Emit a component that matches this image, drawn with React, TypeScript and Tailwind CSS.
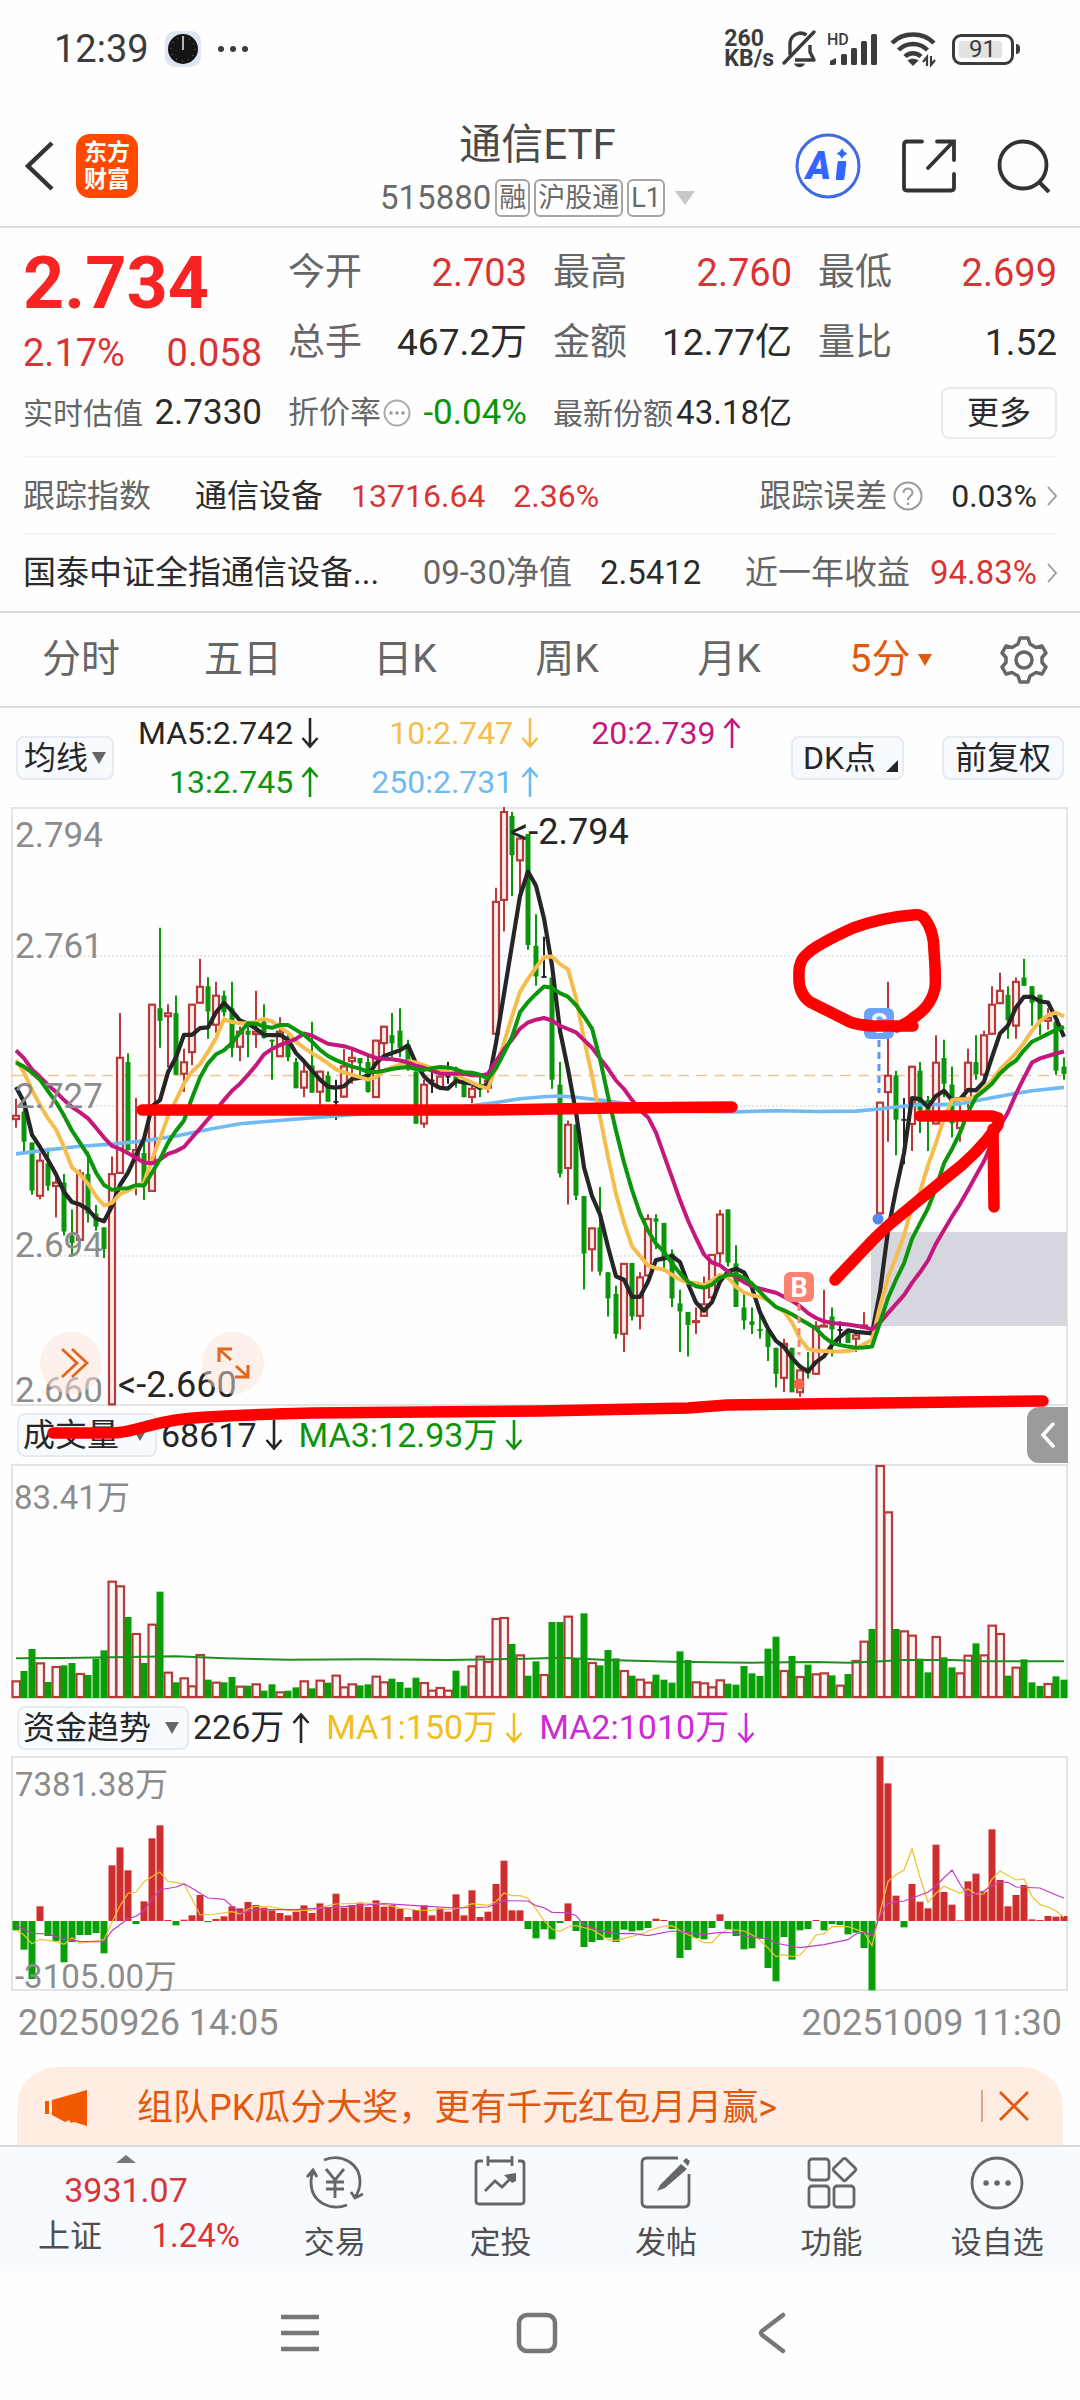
import { useState } from "react";
import type { ReactNode } from "react";

const RED = "#b93a3a";
const GREEN = "#0a950a";
const BLACK = "#262626";
const YELLOW = "#f5bd4d";
const MAGENTA = "#c4187c";
const BLUE = "#6fbaf2";

// distance between two bars and centre of the first one
const STEP = 8;
const barX = (i: number) => 4 + i * STEP;

// price scale units -> pixels in the 1056x599 price pane
const priceY = (v: number) => (v - 22) / 2.45;

type Candle = [kind: "r" | "g" | "k", top: number, bottom: number, high: number, low: number];

const candles: Candle[] = [
  ["r", 776, 789, 737, 808], ["g", 768, 842, 760, 865], ["g", 844, 962, 844, 972], ["r", 886, 977, 870, 983],
  ["g", 895, 950, 857, 962], ["r", 940, 953, 930, 1028], ["g", 942, 1062, 921, 1072], ["g", 1072, 1090, 1008, 1117],
  ["r", 917, 1085, 910, 1085], ["g", 921, 1018, 866, 1040], ["g", 1018, 1050, 997, 1060], ["g", 1052, 1105, 1052, 1127],
  ["r", 919, 1488, 878, 1488], ["r", 634, 921, 527, 921], ["g", 647, 863, 626, 863], ["r", 860, 882, 735, 973],
  ["g", 870, 950, 835, 985], ["r", 504, 965, 504, 965], ["g", 515, 546, 318, 612], ["r", 525, 537, 505, 660],
  ["g", 527, 678, 484, 678], ["r", 645, 678, 614, 720], ["r", 504, 625, 504, 655], ["r", 460, 504, 394, 504],
  ["g", 461, 523, 439, 590], ["r", 482, 558, 450, 575], ["g", 484, 525, 472, 535], ["g", 515, 612, 450, 635],
  ["r", 570, 612, 560, 645], ["g", 570, 580, 560, 635], ["r", 570, 581, 472, 612], ["g", 548, 588, 505, 590],
  ["g", 592, 596, 592, 690], ["r", 570, 635, 537, 635], ["g", 590, 635, 570, 645], ["g", 647, 711, 637, 711],
  ["r", 668, 712, 645, 733], ["g", 655, 722, 548, 722], ["r", 668, 722, 668, 755], ["g", 680, 744, 670, 744],
  ["k", 742, 746, 690, 788], ["r", 655, 734, 615, 734], ["r", 634, 647, 615, 700], ["g", 637, 650, 637, 690],
  ["g", 647, 720, 626, 722], ["r", 592, 735, 592, 735], ["r", 558, 603, 558, 628], ["g", 581, 601, 527, 635],
  ["g", 570, 612, 515, 635], ["g", 605, 665, 592, 668], ["g", 670, 798, 670, 798], ["r", 700, 800, 690, 808],
  ["k", 690, 694, 670, 723], ["r", 680, 712, 680, 712], ["k", 680, 684, 647, 700], ["g", 670, 695, 658, 710],
  ["g", 700, 733, 690, 733], ["r", 710, 735, 705, 748], ["g", 700, 715, 680, 733], ["r", 690, 712, 668, 722],
  ["r", 252, 580, 220, 590], ["r", 32, 252, 22, 327], ["g", 44, 140, 34, 240], ["r", 97, 155, 97, 240],
  ["g", 88, 360, 88, 372], ["g", 362, 437, 285, 460], ["k", 436, 440, 340, 440], ["g", 440, 690, 440, 712],
  ["g", 702, 920, 647, 930], ["r", 798, 909, 790, 996], ["g", 800, 974, 800, 985], ["g", 975, 1116, 975, 1204],
  ["r", 1052, 1108, 1052, 1160], ["g", 1052, 1160, 953, 1170], ["g", 1162, 1226, 1162, 1270], ["g", 1215, 1313, 1195, 1324],
  ["r", 1139, 1315, 1139, 1357], ["g", 1139, 1270, 1139, 1280], ["r", 1172, 1271, 1162, 1302], ["r", 1029, 1172, 1020, 1172],
  ["g", 1030, 1038, 1020, 1105], ["g", 1041, 1130, 1041, 1160], ["g", 1116, 1226, 1106, 1247], ["g", 1238, 1258, 1205, 1357],
  ["g", 1259, 1291, 1259, 1368], ["r", 1279, 1283, 1248, 1313], ["r", 1238, 1271, 1172, 1271], ["r", 1117, 1226, 1117, 1235],
  ["r", 1018, 1118, 1009, 1140], ["g", 1008, 1138, 1008, 1148], ["g", 1140, 1247, 1096, 1247], ["g", 1248, 1280, 1215, 1302],
  ["g", 1282, 1291, 1248, 1313], ["g", 1301, 1305, 1260, 1324], ["g", 1303, 1345, 1292, 1379], ["g", 1347, 1411, 1347, 1444],
  ["r", 1335, 1423, 1325, 1455], ["g", 1347, 1456, 1347, 1456], ["r", 1400, 1458, 1400, 1467], ["g", 1395, 1410, 1357, 1422],
  ["r", 1292, 1413, 1282, 1413], ["r", 1290, 1294, 1205, 1294], ["g", 1270, 1302, 1248, 1368], ["k", 1301, 1305, 1282, 1335],
  ["g", 1305, 1335, 1305, 1335], ["r", 1314, 1327, 1310, 1357], ["r", 1290, 1300, 1260, 1300], ["g", 1300, 1310, 1300, 1310],
  ["r", 744, 1020, 744, 1030], ["r", 678, 723, 450, 842], ["g", 680, 788, 668, 875], ["k", 786, 790, 735, 897],
  ["r", 656, 801, 656, 865], ["g", 668, 765, 647, 821], ["g", 740, 765, 730, 865], ["r", 646, 800, 581, 800],
  ["g", 637, 700, 592, 733], ["g", 702, 797, 658, 832], ["r", 775, 811, 745, 842], ["r", 646, 745, 614, 760],
  ["g", 647, 677, 581, 690], ["r", 579, 680, 570, 690], ["r", 504, 580, 461, 580], ["r", 470, 505, 428, 505],
  ["g", 482, 545, 461, 590], ["r", 448, 560, 440, 590], ["g", 440, 460, 394, 460], ["g", 461, 502, 461, 558],
  ["g", 482, 545, 482, 581], ["r", 536, 548, 515, 568], ["g", 548, 668, 548, 678], ["g", 658, 676, 636, 690],
];

const ma5 = [
  708, 745, 825, 855, 887, 922, 965, 990, 996, 1008, 1030, 1037, 1000, 948, 918, 875, 835, 755, 740, 672, 635, 580, 580,
  564, 562, 525, 502, 522, 545, 553, 565, 580, 581, 580, 592, 625, 645, 668, 690, 707, 710, 706, 688, 686, 680, 650, 632,
  625, 618, 606, 650, 682, 700, 710, 712, 693, 697, 700, 710, 702, 600, 480, 360, 240, 180, 215, 295, 410, 570, 665, 770,
  905, 975, 1020, 1100, 1172, 1180, 1222, 1222, 1185, 1132, 1128, 1122, 1137, 1190, 1236, 1256, 1235, 1185, 1160, 1153,
  1162, 1200, 1260, 1300, 1330, 1345, 1372, 1393, 1405, 1382, 1368, 1340, 1320, 1304, 1308, 1310, 1312, 1210, 1060, 960,
  870, 735, 738, 757, 730, 717, 740, 738, 715, 716, 695, 635, 577, 557, 513, 487, 487, 498, 501, 540, 585,
];

const ma10 = [
  642, 672, 715, 752, 785, 812, 855, 905, 922, 945, 975, 998, 992, 970, 962, 952, 942, 885, 835, 780, 740, 700, 670, 652,
  622, 588, 542, 549, 552, 552, 548, 541, 547, 562, 575, 597, 612, 625, 637, 650, 665, 672, 678, 684, 690, 684, 668, 660,
  653, 645, 648, 655, 662, 668, 670, 678, 688, 697, 706, 712, 660, 600, 535, 475, 443, 415, 390, 388, 407, 420, 490, 590,
  680, 780, 880, 970, 1040, 1098, 1122, 1145, 1152, 1155, 1168, 1180, 1187, 1188, 1194, 1182, 1168, 1175, 1197, 1212,
  1218, 1222, 1230, 1247, 1258, 1285, 1325, 1350, 1354, 1355, 1356, 1356, 1355, 1350, 1338, 1328, 1245, 1175, 1125, 1072,
  1000, 965, 900, 845, 785, 740, 738, 738, 730, 712, 692, 665, 645, 625, 600, 570, 547, 532, 526, 535,
];

const ma13 = [
  648, 658, 673, 690, 718, 745, 778, 815, 845, 875, 918, 948, 960, 957, 956, 948, 950, 918, 885, 845, 815, 790, 735, 685,
  650, 628, 618, 600, 575, 552, 553, 560, 563, 556, 556, 568, 580, 597, 617, 632, 642, 650, 658, 663, 671, 671, 668, 664,
  661, 659, 664, 666, 662, 659, 660, 665, 672, 673, 678, 688, 662, 625, 585, 525, 500, 480, 462, 465, 478, 487, 507, 535,
  565, 640, 730, 815, 893, 960, 1018, 1060, 1092, 1112, 1140, 1165, 1185, 1196, 1200, 1192, 1175, 1168, 1168, 1175, 1190,
  1210, 1230, 1247, 1255, 1265, 1277, 1288, 1300, 1320, 1335, 1340, 1344, 1347, 1346, 1344, 1285, 1225, 1180, 1140, 1080,
  1042, 1005, 955, 895, 860, 820, 770, 732, 717, 700, 675, 657, 643, 618, 597, 588, 578, 568, 561,
];

const ma20 = [
  618, 638, 665, 683, 703, 720, 740, 757, 770, 785, 808, 832, 852, 860, 870, 882, 893, 895, 886, 872, 865, 855, 832, 810,
  787, 765, 740, 717, 700, 678, 655, 628, 615, 605, 598, 590, 577, 582, 592, 602, 605, 608, 614, 622, 630, 637, 639, 640,
  643, 648, 656, 661, 668, 675, 676, 675, 676, 679, 680, 676, 645, 615, 592, 565, 550, 543, 539, 545, 558, 566, 574, 593,
  612, 638, 663, 692, 713, 740, 765, 782, 820, 875, 930, 985, 1035, 1078, 1118, 1138, 1145, 1160, 1175, 1186, 1196, 1202,
  1207, 1212, 1222, 1232, 1245, 1262, 1274, 1282, 1286, 1288, 1290, 1293, 1296, 1302, 1285, 1262, 1240, 1218, 1188, 1162,
  1133, 1092, 1058, 1025, 995, 960, 925, 890, 845, 805, 770, 725, 685, 648, 638, 632, 626, 621,
];

type Point = [index: number, value: number];

const ma250: Point[] = [
  [0, 872], [4, 862], [8, 853], [12, 848], [16, 840], [20, 828], [24, 812], [28, 798], [34, 788], [40, 779], [46, 770],
  [52, 765], [56, 756], [60, 746], [63, 737], [66, 732], [68, 730], [70, 733], [73, 740], [76, 748], [80, 762], [85, 768],
  [90, 769], [95, 766], [100, 768], [105, 767], [108, 762], [110, 757], [113, 751], [116, 751], [118, 749], [121, 738],
  [124, 727], [127, 717], [131, 709],
];

// positive = rising bar (hollow), negative = falling bar (solid)
const volumes = [
  53, -81, -147, 107, -48, 96, -98, -105, 75, -69, -118, -143, 352, 338, -243, 195, -105, 223, -319, 79, -47, 62, 38, 132,
  -55, 49, -47, -63, 37, -37, 44, -22, -41, 20, -22, -32, 53, -29, 55, -46, 70, 35, 44, -38, -41, 67, 50, -58, -48, -31,
  -61, 48, 25, 33, 25, -82, -37, 98, 127, 111, 240, 243, -162, 131, -67, -110, 72, -228, -228, 247, -118, -254, 108, -98,
  -144, -119, 84, -67, 58, 49, -70, -55, -46, -140, -114, 50, 47, 35, 56, -43, -40, -96, -74, -66, -148, -184, 84, -126,
  66, -100, 74, 77, -68, 40, -72, 114, 172, -207, 699, 560, -207, 203, 190, -118, -77, 186, -122, -92, 77, 130, -164, 131,
  220, 195, -67, 94, -116, -47, -36, 45, -65, -55,
];

const volumeAvg: Point[] = [
  [0, 778], [6, 777], [12, 775], [20, 772], [26, 778], [34, 782], [44, 781], [54, 783], [64, 779], [68, 776], [74, 783],
  [82, 788], [92, 791], [100, 789], [104, 791], [107, 788], [111, 783], [117, 783], [121, 787], [131, 787],
];

const funds = [
  -28, -86, -174, 44, -45, -60, -124, -63, -42, -42, -36, -97, 167, 221, 152, -9, 59, 248, 287, 3, -13, 4, 17, 78, -3, 6,
  14, 44, 38, 57, 48, 40, 32, 24, 17, 28, 47, 24, 53, 42, 82, 40, 48, 55, 42, 62, 43, 48, 37, 12, 33, 47, 17, 40, 28, 80,
  17, 92, 12, 28, 111, 181, 32, 32, -24, -52, -25, -55, -6, 53, -30, -78, -63, -57, -50, -63, -26, -31, -28, -21, 7, 3,
  -24, -111, -87, -51, -55, -21, 20, -24, -45, -85, -82, -53, -141, -181, -48, -116, -28, -24, 3, -28, -9, -12, -40, -35,
  -81, -208, 494, 413, 76, -19, 111, 58, 38, 229, 87, 49, 2, 119, 142, 88, 275, 123, 44, 78, 108, 5, 3, 15, 13, 15,
];

const fundMa1: Point[] = [
  [0, 693], [1, 708], [2, 734], [3, 721], [4, 724], [5, 728], [6, 736], [7, 716], [8, 732], [11, 722], [12, 670], [13, 620],
  [14, 583], [15, 580], [16, 548], [17, 533], [18, 519], [19, 547], [20, 550], [21, 555], [22, 600], [23, 648], [25, 645],
  [27, 638], [28, 645], [29, 630], [30, 622], [32, 624], [34, 634], [37, 634], [39, 620], [40, 615], [44, 612], [46, 617],
  [48, 627], [50, 633], [52, 634], [53, 628], [54, 632], [56, 625], [57, 614], [59, 619], [60, 608], [61, 582], [62, 590],
  [63, 590], [64, 598], [65, 630], [66, 665], [67, 690], [68, 697], [69, 684], [70, 680], [72, 692], [73, 706], [74, 722],
  [75, 725], [78, 706], [80, 688], [81, 681], [82, 680], [83, 695], [85, 718], [86, 731], [87, 731], [88, 705], [89, 691],
  [91, 696], [92, 707], [93, 724], [94, 747], [95, 773], [96, 767], [97, 773], [98, 768], [99, 743], [100, 708], [101, 704],
  [102, 683], [104, 683], [106, 700], [107, 740], [108, 640], [109, 547], [110, 527], [111, 513], [112, 450], [113, 535],
  [114, 610], [115, 583], [116, 562], [118, 583], [119, 570], [120, 585], [121, 585], [122, 540], [123, 516], [125, 543],
  [126, 540], [127, 592], [128, 617], [129, 624], [130, 636], [131, 655],
];

const fundMa2: Point[] = [
  [0, 679], [2, 703], [4, 705], [6, 720], [8, 727], [11, 729], [12, 695], [14, 659], [15, 652], [16, 635], [17, 600],
  [18, 572], [20, 564], [21, 555], [22, 568], [24, 597], [26, 601], [28, 642], [30, 632], [35, 632], [41, 623], [46, 614],
  [50, 620], [55, 627], [59, 624], [60, 615], [61, 605], [64, 606], [65, 620], [66, 626], [67, 640], [69, 641], [70, 650],
  [71, 677], [73, 695], [75, 704], [77, 703], [79, 710], [82, 696], [86, 706], [88, 700], [90, 702], [91, 711], [94, 720],
  [95, 733], [98, 746], [101, 737], [104, 722], [105, 705], [106, 699], [107, 711], [108, 650], [109, 613], [111, 606],
  [114, 580], [115, 560], [117, 513], [118, 555], [119, 590], [121, 575], [122, 560], [123, 549], [124, 550], [125, 564],
  [128, 567], [130, 588], [131, 597],
];

const toPoints = (points: Point[], y: (v: number) => number) =>
  points.map(([i, v]) => `${barX(i)},${y(v).toFixed(1)}`).join(" ");

const withIndex = (values: number[]): Point[] => values.map((v, i) => [i, v]);

const priceLines = [
  { points: ma250, color: BLUE, width: 3.6 },
  { points: withIndex(ma5), color: BLACK, width: 4.2 },
  { points: withIndex(ma10), color: YELLOW, width: 4 },
  { points: withIndex(ma20), color: MAGENTA, width: 4 },
  { points: withIndex(ma13), color: GREEN, width: 4 },
];

const priceLabels = [
  { text: "2.794", y: 40 },
  { text: "2.761", y: 151 },
  { text: "2.727", y: 301 },
  { text: "2.694", y: 450 },
  { text: "2.660", y: 595 },
];

const Triangle = ({ className }: { className: string }) => (
  <svg viewBox="0 0 10 10" preserveAspectRatio="none" className={className} fill="currentColor">
    <path d="M0 0H10L5 10Z" />
  </svg>
);

const Arrow = ({ up = false }: { up?: boolean }) => (
  <svg viewBox="0 0 18 32" className="h-8 w-[18px] shrink-0" fill="none" stroke="currentColor" strokeWidth="2.6">
    {up ? <path d="M9 31V3M1.500 11L9 2.500L16.500 11" /> : <path d="M9 1V29M1.500 21L9 29.500L16.500 21" />}
  </svg>
);

const ChevronRight = () => (
  <svg viewBox="0 0 10 20" className="ml-2.5 h-5 w-2.5" fill="none" stroke="#999" strokeWidth="1.8">
    <path d="M1 1L9 10L1 19" />
  </svg>
);

const StatusBar = () => (
  <div className="flex h-[98px] items-center pl-[54px] pr-[60px] text-[#3c3c3c]">
    <span className="text-[38px]">12:39</span>
    <svg viewBox="0 0 36 36" className="ml-4 h-9 w-9">
      <rect width="36" height="36" rx="10" fill="#dfe5f2" />
      <circle cx="18" cy="18" r="15" fill="#141414" />
      <circle cx="18" cy="18" r="12" fill="none" stroke="#999" strokeWidth="1" strokeDasharray="1 5.280" />
      <path d="M18 5V19" stroke="#ddd" strokeWidth="1.600" />
    </svg>
    <svg viewBox="0 0 32 8" className="ml-4 h-2 w-8" fill="#3c3c3c">
      <circle cx="4" cy="4" r="3" />
      <circle cx="16" cy="4" r="3" />
      <circle cx="28" cy="4" r="3" />
    </svg>

    <div className="ml-auto flex items-center">
      <div className="text-[23px] leading-[20px] font-bold">
        <p>260</p>
        <p>KB/s</p>
      </div>
      <svg viewBox="0 0 36 38" className="ml-2 h-[38px] w-9" fill="none" stroke="#3c3c3c" strokeWidth="3.400">
        <path d="M8 25V14C8 8 12 4 18 3C21 3 23 4 24.500 5M28 15V22L32 30H13" strokeLinejoin="round" />
        <path d="M32 2L2 33" strokeLinecap="round" />
        <path d="M12 33.500C14 38.500 21 38.500 23 33.500Z" fill="#3c3c3c" stroke="none" />
      </svg>
      <svg viewBox="0 0 50 36" className="ml-2.5 h-9 w-[50px]" fill="#3c3c3c">
        <text x="-1" y="14" fontSize="16" fontWeight="500">HD</text>
        <path d="M2 34V30L8 27V32Q8 34 6 34Z" />
        <rect x="13" y="23" width="6" height="11" rx="1.500" />
        <rect x="23" y="17" width="6" height="17" rx="1.500" />
        <rect x="33" y="10" width="6" height="24" rx="1.500" />
        <rect x="43" y="3" width="6" height="31" rx="1.500" />
      </svg>
      <svg viewBox="0 0 46 36" className="ml-3 h-9 w-[46px]" fill="none" stroke="#3c3c3c" strokeWidth="4.500">
        <path d="M2 12C13 0.500 33 0.500 44 12" />
        <path d="M8.500 19C16.500 11 29.500 11 37.500 19" />
        <path d="M15 25.500C19.500 21 26.500 21 31 25.500" />
        <path d="M17.500 29.500L23 35L28.500 29.500C25.500 27 20.500 27 17.500 29.500Z" fill="#3c3c3c" stroke="none" />
        <path d="M37 35V26L33 31M41 25V34L45 29" strokeWidth="2.200" />
      </svg>
      <div className="ml-4 flex h-[31px] w-[62px] items-center rounded-[9px] border-3 border-[#3c3c3c] p-1">
        <span className="flex h-full w-[90%] items-center justify-center rounded-[3px] bg-[#e2e2e2] pl-1 text-[24px]">91</span>
      </div>
      <span className="ml-0.5 h-2.5 w-1 rounded-r bg-[#3c3c3c]" />
    </div>
  </div>
);

const Tag = ({ children }: { children: ReactNode }) => (
  <span className="flex h-[38px] items-center rounded-md border-2 border-[#a5a5a5] px-0.5 text-[27px]">{children}</span>
);

const Header = () => (
  <header className="flex h-[130px] items-center border-b-2 border-[#dadada] pr-[29px] pl-6">
    <div className="flex flex-1 items-center pt-2">
      <button aria-label="返回">
        <svg viewBox="0 0 30 50" className="h-[50px] w-[30px]" fill="none" stroke="#333" strokeWidth="4.500">
          <path d="M28 2L4 25L28 48" />
        </svg>
      </button>
      <a
        href="#home"
        className="ml-[22px] flex h-16 w-[62px] flex-col items-center justify-center rounded-[14px] bg-[#ff4800] text-[23px] leading-[27px] font-bold text-white"
      >
        <span>东方</span>
        <span>财富</span>
      </a>
    </div>
    <div className="flex flex-col items-center pt-3.5">
      <h1 className="text-[42px] leading-[50px] text-[#4a4a4a]">通信ETF</h1>
      <button className="mt-2 flex items-center gap-1 text-[#6a6a6a]">
        <span className="text-[33px] leading-[40px]">515880</span>
        <Tag>融</Tag>
        <Tag>沪股通</Tag>
        <Tag>L1</Tag>
        <Triangle className="ml-1.5 h-3.5 w-5 text-[#c8c8c8]" />
      </button>
    </div>
    <div className="flex flex-1 items-center justify-end gap-[41px] pt-2">
      <button aria-label="Ai">
        <svg viewBox="0 0 66 66" className="h-[66px] w-[66px]">
          <circle cx="33" cy="33" r="31" fill="none" stroke="#4069e5" strokeWidth="3" />
          <text x="11" y="46" fontSize="38" fontWeight="900" fontStyle="italic" fill="#3366ff">A</text>
          <path d="M44 28H50Q51.500 28 51.300 29.500L49.500 45.500Q49.300 47 48 47H42Q40.500 47 40.700 45.500L42.500 29.500Q42.700 28 44 28Z" fill="#3366ff" />
          <path d="M47 15Q48.500 19 52.500 20.500Q48.500 22 47 26Q45.500 22 41.500 20.500Q45.500 19 47 15Z" fill="#3366ff" />
        </svg>
      </button>
      <button aria-label="分享">
        <svg viewBox="0 0 54 54" className="h-[54px] w-[54px]" fill="none" stroke="#333" strokeWidth="3.800" strokeLinecap="round">
          <path d="M20 2.500H5Q2 2.500 2 5.500V48.500Q2 51.500 5 51.500H49Q52 51.500 52 48.500V35" />
          <path d="M35 2.500H52V21M50 4L26 29" />
        </svg>
      </button>
      <button aria-label="搜索">
        <svg viewBox="0 0 54 54" className="h-[54px] w-[54px]" fill="none" stroke="#333" strokeWidth="3.800">
          <circle cx="26" cy="26" r="23.500" />
          <path d="M42 43L52 53" strokeWidth="4" />
        </svg>
      </button>
    </div>
  </header>
);

const Stat = ({ label, value, red }: { label: string; value: string; red?: boolean }) => (
  <div className="flex h-[70px] items-center justify-between">
    <span className="text-[37px] text-[#666]">{label}</span>
    <span className={red ? "text-[38px] text-[#d93434]" : "text-[37px] text-[#2b2b2b]"}>{value}</span>
  </div>
);

const Quote = () => (
  <section className="px-[23px] text-[#2b2b2b]">
    <div className="grid grid-cols-4 gap-x-[26px] border-b-2 border-[#f4f4f4] pt-2.5 pb-2">
      <div className="row-span-2">
        <p className="flex h-[92px] items-center text-[72px] font-bold text-[#fa2323]">2.734</p>
        <p className="flex h-[46px] items-center justify-between text-[38px] text-[#d93434]">
          <span>2.17%</span>
          <span>0.058</span>
        </p>
      </div>
      <Stat label="今开" value="2.703" red />
      <Stat label="最高" value="2.760" red />
      <Stat label="最低" value="2.699" red />
      <Stat label="总手" value="467.2万" />
      <Stat label="金额" value="12.77亿" />
      <Stat label="量比" value="1.52" />
      <div className="flex h-[70px] items-center justify-between">
        <span className="text-[30px] text-[#666]">实时估值</span>
        <span className="text-[35px]">2.7330</span>
      </div>
      <div className="flex h-[70px] items-center justify-between">
        <span className="flex items-center text-[31px] text-[#666]">
          折价率
          <svg viewBox="0 0 28 28" className="ml-0.5 h-7 w-7" fill="#999">
            <circle cx="14" cy="14" r="12.500" fill="none" stroke="#aaa" strokeWidth="2" />
            <circle cx="8" cy="14" r="1.800" />
            <circle cx="14" cy="14" r="1.800" />
            <circle cx="20" cy="14" r="1.800" />
          </svg>
        </span>
        <span className="text-[35px] text-[#0a950a]">-0.04%</span>
      </div>
      <div className="flex h-[70px] items-center justify-between">
        <span className="text-[30px] text-[#666]">最新份额</span>
        <span className="text-[33px]">43.18亿</span>
      </div>
      <div className="flex h-[70px] items-center justify-end">
        <button className="h-[52px] rounded-lg border-2 border-[#e9e9e9] px-6 text-[32px]">更多</button>
      </div>
    </div>
    <a href="#index" className="flex h-[77px] items-center border-b-2 border-[#f4f4f4] text-[32px]">
      <span className="text-[#666]">跟踪指数</span>
      <span className="ml-11">通信设备</span>
      <span className="ml-7 text-[#d93434]">13716.64</span>
      <span className="ml-7 text-[#d93434]">2.36%</span>
      <span className="ml-auto text-[#666]">跟踪误差</span>
      <svg viewBox="0 0 30 30" className="ml-1.5 h-[30px] w-[30px]" fill="none" stroke="#999" strokeWidth="2">
        <circle cx="15" cy="15" r="13.500" />
        <path d="M10.500 12C10.500 6 19.500 6 19.500 11.500C19.500 15 15 15 15 19M15 21.500V24" />
      </svg>
      <span className="ml-7">0.03%</span>
      <ChevronRight />
    </a>
    <a href="#fund" className="flex h-[76px] items-center text-[33px]">
      <span>国泰中证全指通信设备...</span>
      <span className="ml-auto text-[#666]">09-30净值</span>
      <span className="ml-7">2.5412</span>
      <span className="ml-auto text-[#666]">近一年收益</span>
      <span className="ml-5 text-[#d93434]">94.83%</span>
      <ChevronRight />
    </a>
  </section>
);

const periods = ["分时", "五日", "日K", "周K", "月K", "5分"];

const PeriodTabs = () => {
  const [period, setPeriod] = useState("5分");

  return (
    <nav className="flex h-[97px] items-center border-y-2 border-[#dadada]">
      {periods.map((p) => (
        <button
          key={p}
          onClick={() => setPeriod(p)}
          className={`flex w-[15%] items-center justify-center text-[39px] ${p === period ? "text-[#e2590e]" : "text-[#666]"}`}
        >
          {p}
          {p === "5分" && <Triangle className="ml-2 h-3 w-3.5" />}
        </button>
      ))}
      <button aria-label="设置" className="flex flex-1 justify-center pr-1">
        <svg viewBox="0 0 48 48" className="h-12 w-12" fill="none" stroke="#666" strokeWidth="3.500" strokeLinejoin="round">
          <path d="M20 2H28L30 8L36 11.500L42 10L46 17L42 21.500V26.500L46 31L42 38L36 36.500L30 40L28 46H20L18 40L12 36.500L6 38L2 31L6 26.500V21.500L2 17L6 10L12 11.500L18 8Z" />
          <circle cx="24" cy="24" r="8" />
        </svg>
      </button>
    </nav>
  );
};

const chip = "flex h-11 items-center rounded-lg border-2 border-[#e6eaf1] bg-[#f7faff] text-[32px] text-[#262626]";

const MaLegend = () => (
  <div className="flex h-[99px] items-center px-4">
    <button className={`${chip} px-1.5`}>
      均线
      <Triangle className="ml-1 h-3 w-3.5 text-[#666]" />
    </button>
    <div className="ml-6 grid grid-cols-[auto_auto_auto] gap-x-[52px] text-[32px] leading-[49px]">
      <span className="flex items-center justify-end gap-2 text-[#262626]">MA5:2.742<Arrow /></span>
      <span className="flex items-center justify-end gap-2 text-[#f5bd4d]">10:2.747<Arrow /></span>
      <span className="flex items-center justify-end gap-2 text-[#c4187c]">20:2.739<Arrow up /></span>
      <span className="flex items-center justify-end gap-2 text-[#0a950a]">13:2.745<Arrow up /></span>
      <span className="flex items-center justify-end gap-2 text-[#6fbaf2]">250:2.731<Arrow up /></span>
    </div>
    <button className={`${chip} ml-auto pr-1 pl-2.5`}>
      DK点
      <svg viewBox="0 0 10 10" className="mt-4 ml-2.5 h-3 w-3" fill="#262626">
        <path d="M10 0V10H0Z" />
      </svg>
    </button>
    <button className={`${chip} ml-[38px] px-[11px]`}>前复权</button>
  </div>
);

const PriceChart = () => (
  <div className="relative mx-3">
    <svg viewBox="0 0 1056 599" className="block w-full overflow-visible">
      <rect x="0" y="1" width="1055" height="597" fill="none" stroke="#e4e4e4" strokeWidth="2" />
      <rect x="859" y="425" width="196" height="94" fill="#d6d6de" />
      {[149, 299, 449].map((y) => (
        <path key={y} d={`M0 ${y}H1055`} stroke="#d0d0d0" strokeDasharray="2 2" />
      ))}
      <path d="M0 268.500H1055" stroke="#efc595" strokeWidth="1.500" strokeDasharray="11 7" />

      {candles.map(([kind, top, bottom, high, low], i) => {
        const x = barX(i);
        const color = kind === "r" ? RED : kind === "g" ? GREEN : BLACK;
        const y = priceY(top);
        const h = Math.max(priceY(bottom) - y, 2);
        return (
          <g key={i}>
            <path d={`M${x} ${priceY(high)}V${priceY(low)}`} stroke={color} strokeWidth="2" />
            {kind === "r" ? (
              <rect x={x - 3} y={y + 1} width="6" height={Math.max(h - 2, 1)} fill="#fdeeee" stroke={color} strokeWidth="2.200" />
            ) : (
              <rect x={x - 2.5} y={y} width="5" height={h} fill={color} />
            )}
          </g>
        );
      })}

      {priceLines.map((line) => (
        <polyline
          key={line.color}
          points={toPoints(line.points, priceY)}
          fill="none"
          stroke={line.color}
          strokeWidth={line.width}
          strokeLinejoin="round"
        />
      ))}

      {/* buy and sell marks */}
      <path d="M867 233V286" stroke="#5c97f5" strokeWidth="3" strokeDasharray="7 5" />
      <circle cx="866" cy="412" r="5.500" fill="#4f8bf0" />
      <rect x="852" y="201" width="30" height="31" rx="6" fill="#6ba3fb" />
      <text x="867" y="226" fontSize="27" fontWeight="700" textAnchor="middle" fill="#fff">S</text>
      <path d="M787 497V548" stroke="#f98271" strokeWidth="3" strokeDasharray="7 5" />
      <circle cx="787" cy="577" r="5.500" fill="#f9604a" />
      <rect x="772" y="465" width="30" height="30" rx="6" fill="#f98271" />
      <text x="787" y="490" fontSize="27" fontWeight="700" textAnchor="middle" fill="#fff">B</text>

      <g fontSize="35" fill="#8c8c8c">
        {priceLabels.map((l) => (
          <text key={l.text} x="3" y={l.y}>{l.text}</text>
        ))}
      </g>
      <g fontSize="36" fill="#262626">
        <text x="498" y="37">&lt;-2.794</text>
        <text x="106" y="590">&lt;-2.660</text>
      </g>
    </svg>

    <button aria-label="前进" className="absolute bottom-3 left-7 h-[62px] w-[62px] rounded-full bg-[#fbe1d6]/50">
      <svg viewBox="0 0 62 62" fill="none" stroke="#e2661f" strokeWidth="2.800">
        <path d="M22 17L37 31L22 45M32 17L47 31L32 45" />
      </svg>
    </button>
    <button aria-label="全屏" className="absolute bottom-3 left-[190px] h-[62px] w-[62px] rounded-full bg-[#fbe1d6]/50">
      <svg viewBox="0 0 62 62" fill="none" stroke="#e2661f" strokeWidth="3">
        <path d="M17 30V17H30M18 18L29 28M46 33V45H33M45 44L34 34" />
      </svg>
    </button>

    {/* hand-drawn marks */}
    <svg
      viewBox="0 0 1056 599"
      className="pointer-events-none absolute inset-0 z-10 w-full overflow-visible"
      fill="none"
      stroke="#fe0000"
      strokeWidth="11.500"
      strokeLinecap="round"
      strokeLinejoin="round"
    >
      <path d="M130 303L475 303L600 301L720 300" />
      <path d="M41 626H100Q112 626 136 619Q160 612 195 610Q250 607 300 606L528 604L676 601L715 598L1031 594" />
      <path d="M901 219L861 219Q846 218 838 215L798 195Q786 186 787 169Q786 154 795 147Q804 138 841 121Q872 110 901 108Q909 107 912 111Q922 123 922 144Q924 170 923 181Q919 200 901 211Q893 218 885 220" />
      <path d="M823 473L861 433Q868 426 878 417L935 370Q965 348 986 318V311L980 309H908" />
      <path d="M981 322L982 400" />
    </svg>
  </div>
);

const VolumeChart = () => (
  <svg viewBox="0 0 1056 235" className="mx-3 block overflow-visible">
    <rect x="0" y="1" width="1055" height="233" fill="none" stroke="#e4e4e4" strokeWidth="2" />
    {volumes.map((v, i) => {
      const h = Math.abs(v) / 3;
      return v > 0 ? (
        <rect key={i} x={barX(i) - 3.5} y={235 - h} width="7.500" height={h - 2} fill="#fff5f5" stroke={RED} strokeWidth="2.200" />
      ) : (
        <rect key={i} x={barX(i) - 3.5} y={234 - h} width="7" height={h} fill="#06a006" />
      );
    })}
    <polyline points={toPoints(volumeAvg, (v) => (v - 195) / 3)} fill="none" stroke="#1d8f1d" strokeWidth="2" />
    <text x="2" y="45" fontSize="33" fill="#8c8c8c">83.41万</text>
  </svg>
);

const FundChart = () => (
  <svg viewBox="0 0 1056 235" className="mx-3 block overflow-visible">
    <rect x="0" y="1" width="1055" height="233" fill="none" stroke="#e4e4e4" strokeWidth="2" />
    {funds.map((v, i) => {
      const h = Math.abs(v) / 3;
      return (
        <rect
          key={i}
          x={barX(i) - 3.5}
          y={v > 0 ? 165 - h : 165}
          width="7"
          height={h}
          fill={v > 0 ? "#cf2e2e" : "#06a006"}
        />
      );
    })}
    <polyline points={toPoints(fundMa1, (v) => (v - 171) / 3)} fill="none" stroke="#eec12e" strokeWidth="1.200" />
    <polyline points={toPoints(fundMa2, (v) => (v - 171) / 3)} fill="none" stroke="#c53ac9" strokeWidth="1.200" />
    <g fontSize="33" fill="#8c8c8c">
      <text x="3" y="40">7381.38万</text>
      <text x="3" y="232">-3105.00万</text>
    </g>
  </svg>
);

const Banner = () => (
  <div className="mx-[17px] mt-5 flex h-[78px] items-center rounded-t-[40px] bg-[#ffede4] px-7 text-[#e2590e]">
    <svg viewBox="0 0 44 38" className="mt-1 h-[38px] w-11" fill="#f25800">
      <path d="M0 12H4V25H0ZM7 11L42 1V37L29 33L26 34L24 31L20 33L7 26Z" />
    </svg>
    <a href="#activity" className="ml-12 pt-1 text-[36px]">组队PK瓜分大奖，更有千元红包月月赢&gt;</a>
    <span className="ml-auto h-8 w-0.5 bg-[#e9a27d]" />
    <button aria-label="关闭" className="ml-4">
      <svg viewBox="0 0 30 30" className="mr-1.5 h-[30px] w-[30px]" fill="none" stroke="#e2590e" strokeWidth="2.800">
        <path d="M1 1L29 29M29 1L1 29" />
      </svg>
    </button>
  </div>
);

const actions = [
  {
    label: "交易",
    icon: (
      <>
        <path d="M18 5C35 -2 54 8 54 27C54 33 52 38 49 42M41 50C25 56 5 48 5 27C5 23 5.500 20 7 17M1 22L7 15L11 22M45 37L49 43L57 39" />
        <path d="M20 14L29 25L38 14M29 25V43M20 27H38M20 34H38" />
      </>
    ),
  },
  {
    label: "定投",
    icon: (
      <>
        <path d="M12 6H8Q5 6 5 9V46Q5 49 8 49H50Q53 49 53 46V9Q53 6 50 6H47M17 6H41M17 1V11M41 1V11" />
        <path d="M14 36L24 26L31 32L43 20" />
        <path d="M33 20L45 18V26L41 28Z" fill="#666" stroke="none" />
      </>
    ),
  },
  {
    label: "发帖",
    icon: (
      <>
        <path d="M41 3H10Q5 3 5 8V47Q5 52 10 52H47Q52 52 52 47V19" />
        <path d="M44 9L50 14L28 33L20 36L23 30ZM46 6L49 3L53 6L51 11Z" fill="#666" stroke="none" />
      </>
    ),
  },
  {
    label: "功能",
    icon: (
      <>
        <rect x="6" y="4" width="20" height="21" rx="3" />
        <rect x="6" y="31" width="20" height="21" rx="3" />
        <rect x="31" y="31" width="20" height="21" rx="3" />
        <rect x="33" y="6" width="17" height="17" rx="2" transform="rotate(45 41.500 14.500)" />
      </>
    ),
  },
  {
    label: "设自选",
    icon: (
      <>
        <circle cx="29" cy="28" r="25" />
        <path d="M18 28H18.100M29 28H29.100M40 28H40.100" strokeWidth="5.500" strokeLinecap="round" />
      </>
    ),
  },
];

const BottomNav = () => (
  <nav className="flex h-[126px] border-t-2 border-[#d8dade] bg-[#f7faff] text-[#4f4f4f]">
    <a href="#sse" className="flex w-[252px] flex-col items-center pt-2">
      <svg viewBox="0 0 20 8" className="h-2 w-5" fill="#777">
        <path d="M0 8L10 0L20 8Z" />
      </svg>
      <span className="text-[34px] leading-[54px] text-[#d93434]">3931.07</span>
      <span className="flex w-full items-center justify-between pr-3 pl-[38px] text-[32px] leading-[38px]">
        上证
        <span className="text-[33px] text-[#d93434]">1.24%</span>
      </span>
    </a>
    {actions.map((a) => (
      <button key={a.label} className="flex flex-1 flex-col items-center pt-2 text-[31px] leading-[40px]">
        <svg viewBox="0 0 58 56" className="mb-3 h-14 w-[58px]" fill="none" stroke="#666" strokeWidth="2.800">
          {a.icon}
        </svg>
        {a.label}
      </button>
    ))}
  </nav>
);

const SystemNav = () => (
  <div className="flex h-[124px] items-center justify-center gap-[196px] pr-1.5">
    <button aria-label="最近任务">
      <svg viewBox="0 0 40 40" className="h-10 w-10" stroke="#777" strokeWidth="4.500">
        <path d="M1 4H39M1 20H39M1 36H39" />
      </svg>
    </button>
    <button aria-label="主屏幕">
      <svg viewBox="0 0 42 42" className="h-[42px] w-[42px]" fill="none" stroke="#777" strokeWidth="4.500">
        <rect x="3" y="3" width="36" height="36" rx="8" />
      </svg>
    </button>
    <button aria-label="后退">
      <svg viewBox="0 0 40 42" className="h-[42px] w-10" fill="none" stroke="#777" strokeWidth="4.500" strokeLinecap="round">
        <path d="M29 3L8 19Q6 21 8 23L29 39" />
      </svg>
    </button>
  </div>
);

const App = () => {
  return (
    <div className="min-h-screen bg-[#fefefe] font-['Roboto','Noto_Sans_CJK_SC',sans-serif] whitespace-nowrap">
      <StatusBar />
      <Header />
      <Quote />
      <PeriodTabs />
      <MaLegend />
      <PriceChart />

      <div className="relative flex h-[58px] items-center pl-[17px] text-[34px]">
        <button className={`${chip} pr-2 pl-1`}>
          成交量
          <Triangle className="ml-3.5 h-3 w-3.5 text-[#666]" />
        </button>
        <span className="ml-1 flex items-center gap-2 text-[#262626]">68617<Arrow /></span>
        <span className="ml-4 flex items-center gap-2 text-[#0a950a]">MA3:12.93万<Arrow /></span>
        <button aria-label="收起" className="mr-3 ml-auto flex h-14 w-[41px] items-center justify-center rounded-l-xl bg-[#9c9a9d]">
          <svg viewBox="0 0 14 26" className="h-[26px] w-3.5" fill="none" stroke="#fff" strokeWidth="3.500" strokeLinecap="round">
            <path d="M12 2L2 13L12 24" />
          </svg>
        </button>
      </div>
      <VolumeChart />

      <div className="flex h-[57px] items-center pl-[17px] text-[34px]">
        <button className={`${chip} pr-2 pl-1`}>
          资金趋势
          <Triangle className="ml-3.5 h-3 w-3.5 text-[#666]" />
        </button>
        <span className="ml-1 flex items-center gap-2 text-[#262626]">226万<Arrow up /></span>
        <span className="ml-4 flex items-center gap-2 text-[#f0bf1e]">MA1:150万<Arrow /></span>
        <span className="ml-4 flex items-center gap-2 text-[#cd2bd3]">MA2:1010万<Arrow /></span>
      </div>
      <FundChart />

      <div className="flex justify-between px-[18px] pt-2 text-[36px] leading-[48px] text-[#8c8c8c]">
        <span>20250926 14:05</span>
        <span>20251009 11:30</span>
      </div>
      <Banner />
      <BottomNav />
      <SystemNav />
    </div>
  );
};

export default App;
